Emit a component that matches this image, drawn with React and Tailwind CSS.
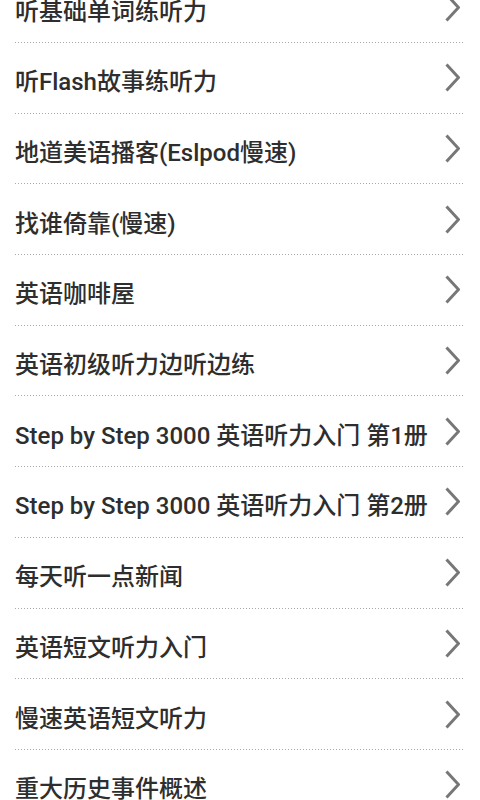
const items = [
  "听基础单词练听力",
  "听Flash故事练听力",
  "地道美语播客(Eslpod慢速)",
  "找谁倚靠(慢速)",
  "英语咖啡屋",
  "英语初级听力边听边练",
  "Step by Step 3000 英语听力入门 第1册",
  "Step by Step 3000 英语听力入门 第2册",
  "每天听一点新闻",
  "英语短文听力入门",
  "慢速英语短文听力",
  "重大历史事件概述",
];

function Chevron() {
  return (
    <svg width="15" height="29" viewBox="0 0 15 29" className="shrink-0 mr-[5px]">
      <path d="M1.5 1.5 L13.5 14.5 L1.5 27.5" fill="none" stroke="#777" strokeWidth="3" />
    </svg>
  );
}

export default function App() {
  return (
    <div className="w-[480px] h-[800px] overflow-hidden bg-white">
      <div className="px-[15px] -mt-[27.7px]">
        {items.map((t) => (
          <div key={t}>
            <div className="h-[69.7px] flex items-center justify-between">
              <span
                className="pt-[9px] text-[24px] leading-none font-medium text-[#2e2e2e] whitespace-nowrap"
                style={{ fontFamily: 'Roboto, "Noto Sans CJK SC", sans-serif' }}
              >
                {t}
              </span>
              <Chevron />
            </div>
            <div className="h-px bg-[linear-gradient(to_right,#aaa_34%,transparent_0)] bg-[length:3px_1px] bg-repeat-x" />
          </div>
        ))}
      </div>
    </div>
  );
}
